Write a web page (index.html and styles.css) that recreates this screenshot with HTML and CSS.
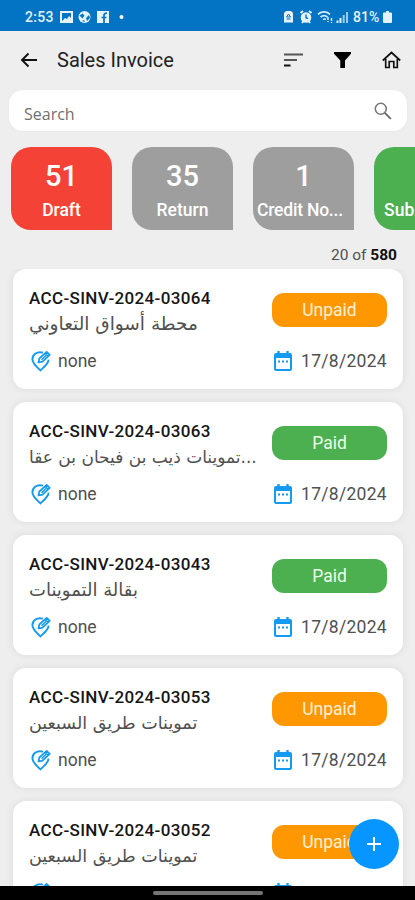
FILE: index.html
```html
<!DOCTYPE html>
<html lang="en">
  <head>
    <title>Sales Invoice</title>
    <meta charset="utf-8" />
    <meta name="viewport" content="width=device-width, initial-scale=1" />
    <link rel="stylesheet" href="styles.css" />
  </head>
  <body>
    <!-- Shared card icons -->
    <svg class="sprite">
      <symbol id="pin" viewBox="0 0 20 22">
        <path d="M12 2.700C6 .900 1.400 4.600 1.400 9.200c0 4.200 4.200 7.400 8 11.200 3.800-3.600 8-6.600 8.200-10.800" fill="none" stroke="currentColor" stroke-width="1.900" />
        <path d="M7.500 12.500l.8-4 7.400-6.700 3 3-7.200 6.900z" fill="#fff" stroke="currentColor" stroke-width="1.700" stroke-linejoin="round" />
        <path d="M14 3.300l3 3M10.500 9.800l4.500-4.300" stroke="currentColor" stroke-width="1.500" />
      </symbol>
      <symbol id="calendar" viewBox="0 0 20 22">
        <path d="M3 3h14a2 2 0 0 1 2 2v14a2 2 0 0 1-2 2H3a2 2 0 0 1-2-2V5a2 2 0 0 1 2-2zm0 5v11h14V8z" fill="currentColor" fill-rule="evenodd" />
        <path d="M5.500 1v3M14.500 1v3" stroke="currentColor" stroke-width="2.400" />
        <path d="M5 11.500h2M9 11.500h2M13 11.500h2" stroke="currentColor" stroke-width="2" />
      </symbol>
    </svg>

    <div class="screen">
      <div class="status-bar">
        <span class="clock">2:53</span>
        <svg class="status-left" width="66" height="14" viewBox="0 0 66 14">
          <path d="M0 1h13v12H0zM2 3v8l3-3 2 1 2-3 2 2V3z" fill="#e4f2fc" fill-rule="evenodd" />
          <circle cx="24.500" cy="7" r="6" fill="#e4f2fc" />
          <path d="M19.500 5.500l3-2 2 2-2 3zM26 8l3-3 1 3-3 3zM22 11l2-1 1 2z" fill="#0274c3" />
          <path d="M37 1h12v12H37z" fill="#e4f2fc" />
          <path d="M44 13V5.500q0-2.500 3-2.500M41.500 7.500h5" fill="none" stroke="#0274c3" stroke-width="1.700" />
          <circle cx="61.500" cy="7" r="2" fill="#fff" />
        </svg>
        <svg class="status-right" width="66" height="16" viewBox="0 0 66 16">
          <path d="M3 2h5l2 2v9.500H1V4z" fill="#e4f2fc" />
          <path d="M3.500 8l2-3 2 3zM3.500 10h4" stroke="#0274c3" fill="none" />
          <circle cx="23" cy="8.500" r="5.300" fill="#e4f2fc" />
          <path d="M17.500 4l2.500-2M28.500 4L26 2M19 14l1.500-2M27 14l-1.500-2" stroke="#e4f2fc" stroke-width="2" />
          <path d="M23 5.500v3.200l2 1" fill="none" stroke="#0274c3" stroke-width="1.400" />
          <path d="M35 5.200q6-4.500 12 0M37.500 8q3.500-2.700 7 0M40 10.500q1.500-1 3 0" fill="none" stroke="#d3eafa" stroke-width="1.700" />
          <path d="M45 8v5M48.500 9v5" stroke="#e4f2fc" stroke-width="1.400" stroke-dasharray="3 1" />
          <path d="M54.500 11.500v2.500M57.500 9v5" stroke="#e4f2fc" stroke-width="2" />
          <path d="M60.700 6v8M64 3v11" stroke="#9accec" stroke-width="2" />
        </svg>
        <span class="percent">81%</span>
        <svg width="9" height="12" viewBox="0 0 9 12">
          <path d="M3 0h3v1.500h2q1 0 1 1V11q0 1-1 1H1q-1 0-1-1V2.500q0-1 1-1h2z" fill="#e4f2fc" />
        </svg>
      </div>

      <div class="app-bar">
        <svg width="18" height="18" viewBox="0 0 18 18" class="back">
          <path d="M17 9H2.500M8.500 2.500L2 9l6.500 6.500" fill="none" stroke="#111" stroke-width="1.900" />
        </svg>
        <h1>Sales Invoice</h1>
        <div class="actions">
          <svg width="19" height="14" viewBox="0 0 19 14">
            <path d="M0 1.500h19M0 7h13" stroke="#555" stroke-width="2" />
            <path d="M0 12.500h6.500" stroke="#111" stroke-width="2" />
          </svg>
          <svg width="17" height="16" viewBox="0 0 17 16">
            <path d="M0 0h17v1.800L11 8.500V16H6.300V8.500L0 1.800z" fill="#000" />
          </svg>
          <svg width="19" height="18" viewBox="0 0 19 18">
            <path d="M.800 9.500l8.700-8 8.700 8M3.700 8v8.500h3.500v-6h4.600v6h3.500V8" fill="none" stroke="#111" stroke-width="1.700" />
          </svg>
        </div>
      </div>

      <div class="search">
        <span>Search</span>
        <svg width="18" height="18" viewBox="0 0 18 18">
          <circle cx="6.800" cy="6.800" r="5.500" fill="none" stroke="#777" stroke-width="1.500" />
          <path d="M10.800 10.800l6 6" stroke="#666" stroke-width="1.800" />
        </svg>
      </div>

      <div class="tiles">
        <div class="tile draft"><b>51</b><span>Draft</span></div>
        <div class="tile"><b>35</b><span>Return</span></div>
        <div class="tile"><b>1</b><span class="clipped">Credit No...</span></div>
        <div class="tile submitted"><b></b><span>Submitted</span></div>
      </div>

      <div class="count">20 of <b>580</b></div>

      <div class="list">
        <div class="card">
          <div class="row top">
            <div class="info">
              <div class="number">ACC-SINV-2024-03064</div>
              <div class="customer market" dir="rtl" lang="ar">محطة أسواق التعاوني</div>
            </div>
            <div class="badge unpaid">Unpaid</div>
          </div>
          <div class="row meta">
            <span class="place"><svg><use href="#pin" /></svg>none</span>
            <span class="date"><svg><use href="#calendar" /></svg>17/8/2024</span>
          </div>
        </div>

        <div class="card">
          <div class="row top">
            <div class="info">
              <div class="number">ACC-SINV-2024-03063</div>
              <div class="customer long" lang="ar">&rlm;تموينات ذيب بن فيحان بن عقا&lrm;...</div>
            </div>
            <div class="badge paid">Paid</div>
          </div>
          <div class="row meta">
            <span class="place"><svg><use href="#pin" /></svg>none</span>
            <span class="date"><svg><use href="#calendar" /></svg>17/8/2024</span>
          </div>
        </div>

        <div class="card">
          <div class="row top">
            <div class="info">
              <div class="number">ACC-SINV-2024-03043</div>
              <div class="customer grocery" dir="rtl" lang="ar">بقالة التموينات</div>
            </div>
            <div class="badge paid">Paid</div>
          </div>
          <div class="row meta">
            <span class="place"><svg><use href="#pin" /></svg>none</span>
            <span class="date"><svg><use href="#calendar" /></svg>17/8/2024</span>
          </div>
        </div>

        <div class="card">
          <div class="row top">
            <div class="info">
              <div class="number">ACC-SINV-2024-03053</div>
              <div class="customer road" dir="rtl" lang="ar">تموينات طريق السبعين</div>
            </div>
            <div class="badge unpaid">Unpaid</div>
          </div>
          <div class="row meta">
            <span class="place"><svg><use href="#pin" /></svg>none</span>
            <span class="date"><svg><use href="#calendar" /></svg>17/8/2024</span>
          </div>
        </div>

        <div class="card">
          <div class="row top">
            <div class="info">
              <div class="number">ACC-SINV-2024-03052</div>
              <div class="customer road" dir="rtl" lang="ar">تموينات طريق السبعين</div>
            </div>
            <div class="badge unpaid">Unpaid</div>
          </div>
          <div class="row meta">
            <span class="place"><svg><use href="#pin" /></svg>none</span>
            <span class="date"><svg><use href="#calendar" /></svg>17/8/2024</span>
          </div>
        </div>
      </div>

      <div class="nav-bar"><div class="handle"></div></div>

      <button class="fab" aria-label="Add">
        <svg width="16" height="16" viewBox="0 0 16 16">
          <path d="M8 1v14M1 8h14" stroke="#fff" stroke-width="2" />
        </svg>
      </button>
    </div>
  </body>
</html>
```
FILE: styles.css
```css
* {
  box-sizing: border-box;
}
body {
  margin: 0;
  background: #eeeeee;
  font-family: Roboto, "DejaVu Sans", sans-serif;
  overflow: hidden;
}
svg {
  flex: none;
}
.sprite {
  display: none;
}
.screen {
  position: relative;
  width: 415px;
  height: 900px;
  display: flex;
  flex-direction: column;
  overflow: hidden;
}

/* Status bar */
.status-bar {
  height: 31px;
  flex: none;
  padding: 2px 23px 0 25px;
  background: #0274c3;
  color: #e4f2fc;
  display: flex;
  align-items: center;
  font-size: 14px;
  font-weight: 500;
}
.clock {
  width: 35px;
  letter-spacing: 0.3px;
}
.status-right {
  margin-left: auto;
  margin-right: 4px;
}
.percent {
  width: 30px;
  white-space: nowrap;
}

/* Header */
.app-bar {
  height: 59px;
  flex: none;
  padding: 0 14px 2px 20px;
  display: flex;
  align-items: center;
}
.app-bar h1 {
  margin: 0 0 0 19px;
  font-size: 20px;
  line-height: 24px;
  font-weight: 400;
  color: #222222;
}
.actions {
  display: flex;
  align-items: center;
  gap: 31px;
  margin-left: auto;
}
.search {
  height: 41px;
  flex: none;
  margin: 0 8px 0 9px;
  padding: 0 15px;
  background: #ffffff;
  border-radius: 14px;
  box-shadow: 0 0 3px rgba(0, 0, 0, 0.04);
  display: flex;
  align-items: center;
  justify-content: space-between;
  font-family: "Open Sans", sans-serif;
  font-size: 16px;
  color: #707070;
}
.search span {
  padding-top: 6px;
}

/* Status tiles, the row runs off the right edge */
.tiles {
  display: flex;
  flex: none;
  gap: 20px;
  margin: 16px 0 0 11px;
}
.tile {
  width: 101px;
  height: 83px;
  flex: none;
  padding-top: 10px;
  background: #9e9e9e;
  color: #ffffff;
  border-radius: 20px 20px 0 20px;
  display: flex;
  flex-direction: column;
  align-items: center;
  font-weight: 500;
}
.tile b {
  height: 36px;
  line-height: 38px;
  font-size: 29px;
  font-weight: 500;
}
.tile span {
  margin-top: 5px;
  line-height: 24px;
  font-size: 17.5px;
  white-space: nowrap;
}
.tile .clipped {
  align-self: flex-start;
  margin-left: 4px;
  letter-spacing: -0.2px;
}
.tile.draft {
  background: #f44336;
}
.tile.submitted {
  background: #4caf50;
}
.count {
  height: 39px;
  flex: none;
  padding: 14px 18px 0 0;
  line-height: 22px;
  text-align: right;
  font-size: 15.5px;
  color: #505050;
}
.count b {
  color: #111111;
}

/* Invoices */
.list {
  flex: 1;
  min-height: 0;
  overflow: hidden;
  padding: 0 12px 0 13px;
  display: flex;
  flex-direction: column;
  gap: 13px;
}
.card {
  height: 120px;
  flex: none;
  padding: 16px 16px 0;
  background: #ffffff;
  border-radius: 13px;
  box-shadow: 0 0 8px rgba(0, 0, 0, 0.08);
}
.row {
  display: flex;
  justify-content: space-between;
}
.info {
  display: flex;
  flex-direction: column;
  align-items: flex-start;
}
.number {
  line-height: 26px;
  font-size: 17px;
  font-weight: 500;
  letter-spacing: 0.35px;
  color: #161616;
  white-space: nowrap;
}
.customer {
  height: 26px;
  line-height: 26px;
  font-family: "DejaVu Sans", sans-serif;
  font-size: 17px;
  color: #505050;
  white-space: nowrap;
}
.customer.market {
  font-size: 18.5px;
}
.customer.grocery {
  font-size: 18px;
}
.customer.road {
  font-size: 17.5px;
}
.badge {
  width: 115px;
  height: 34px;
  flex: none;
  margin: 8px 0 0 -10px;
  border-radius: 12px;
  color: #ffffff;
  line-height: 34px;
  text-align: center;
  font-size: 17.5px;
}
.badge.unpaid {
  background: #ff9800;
  color: #fff1d6;
}
.badge.paid {
  background: #4caf50;
  color: #eaffea;
}
.meta {
  margin-top: 13px;
  align-items: center;
  font-size: 17.5px;
  line-height: 22px;
  color: #505050;
}
.place,
.date {
  display: flex;
  align-items: center;
}
.meta svg {
  width: 20px;
  height: 22px;
  color: #149af0;
}
.place {
  padding-left: 2px;
  gap: 7px;
}
.date {
  gap: 8px;
  letter-spacing: 0.3px;
}

/* Overlay button and system navigation */
.fab {
  position: absolute;
  right: 16px;
  bottom: 31px;
  width: 50px;
  height: 50px;
  padding: 0;
  border: 0;
  border-radius: 50%;
  background: #0796ff;
  display: flex;
  align-items: center;
  justify-content: center;
}
.nav-bar {
  height: 14px;
  flex: none;
  background: #000000;
  display: flex;
  align-items: center;
  justify-content: center;
}
.handle {
  width: 110px;
  height: 4px;
  border-radius: 2px;
  background: #757575;
}
```
